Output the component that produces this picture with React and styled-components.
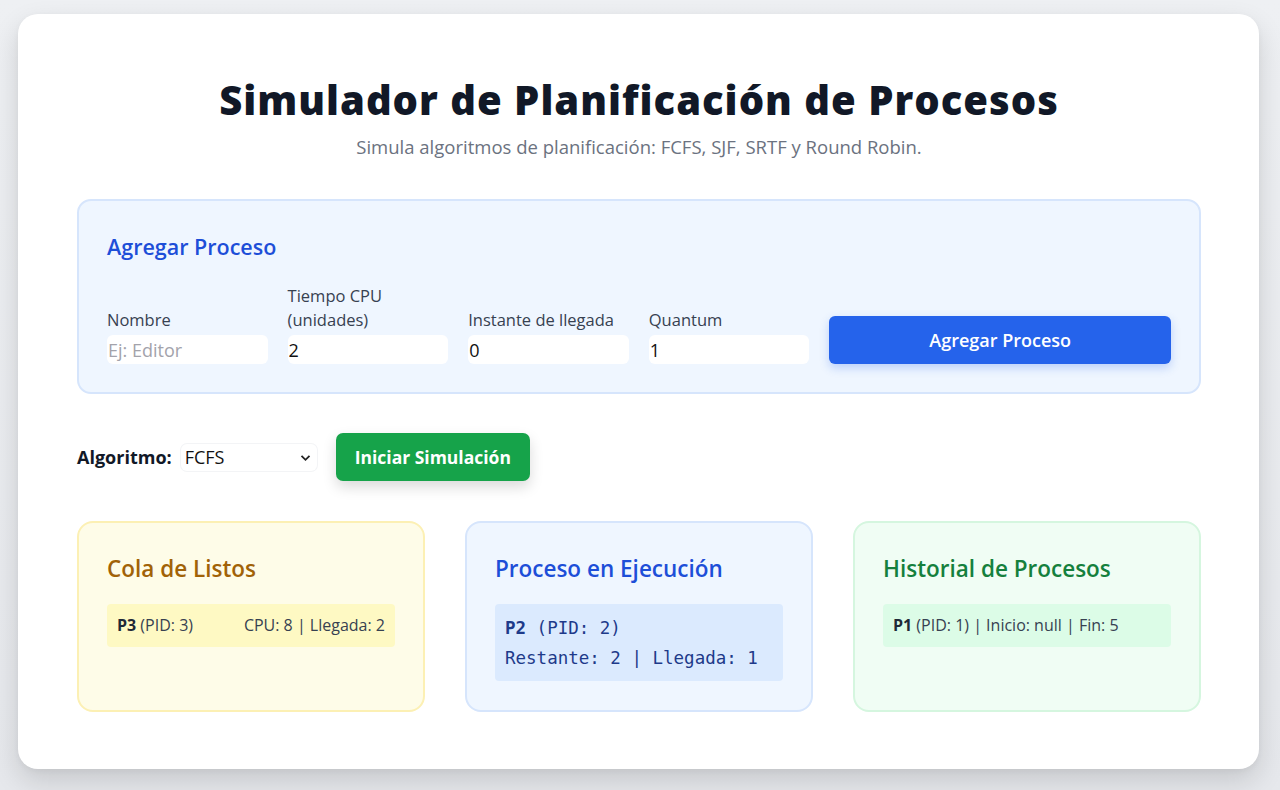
import React from "react";
import styled, { createGlobalStyle } from "styled-components";

const Global = createGlobalStyle`
  html, body { margin: 0; padding: 0; }
  body {
    background: linear-gradient(180deg, #eef0f3 0%, #e6e8ec 100%);
    font-family: "Open Sans", "Noto Sans", sans-serif;
    min-height: 790px;
  }
  * { box-sizing: border-box; }
`;

const Page = styled.div`
  padding: 14px 21px 20px 18px;
`;

const Card = styled.main`
  background: #ffffff;
  border-radius: 20px;
  box-shadow: 0 12px 28px rgba(0, 0, 0, 0.14), 0 2px 6px rgba(0, 0, 0, 0.04);
  padding: 62px 58px 58px 59px;
  height: 755px;
`;

const Title = styled.h1`
  margin: 0;
  text-align: center;
  font-size: 40px;
  line-height: 48px;
  font-weight: 800;
  color: #111827;
  letter-spacing: 1px;
`;

const Subtitle = styled.p`
  margin: 10px 0 0;
  text-align: center;
  font-size: 18.5px;
  line-height: 26px;
  color: #6b7280;
`;

const Panel = styled.section`
  margin-top: 39px;
  background: #eff6ff;
  border: 2px solid #d6e5fc;
  border-radius: 14px;
  padding: 30px 28px 28px 28px;
`;

const PanelTitle = styled.h2`
  margin: 0 0 21px;
  font-size: 21.5px;
  line-height: 32px;
  font-weight: 600;
  color: #1d4ed8;
`;

const BoxTitle = styled.h3`
  margin: 0 0 19px;
  font-size: 22.5px;
  line-height: 32px;
  font-weight: 600;
  color: ${(p) => p.$color};
`;

const FieldRow = styled.div`
  display: flex;
  align-items: flex-end;
  gap: 20px;
`;

const Field = styled.label`
  display: flex;
  flex-direction: column;
  width: 160.6px;
`;

const LabelText = styled.span`
  font-size: 16.5px;
  line-height: 24px;
  font-weight: 500;
  color: #374151;
  margin-bottom: 3px;
`;

const Input = styled.input`
  height: 29px;
  border: none;
  border-radius: 6px;
  background: #ffffff;
  padding: 0 1px;
  font-family: inherit;
  font-size: 18px;
  color: #111;
  outline: none;
  &::placeholder { color: #a3a3ab; }
`;

const PrimaryButton = styled.button`
  flex: 1;
  height: 48px;
  border: none;
  border-radius: 6px;
  background: #2563eb;
  color: #ffffff;
  font-family: inherit;
  font-size: 18px;
  font-weight: 600;
  box-shadow: 0 4px 10px rgba(37, 99, 235, 0.25);
  cursor: pointer;
`;

const Controls = styled.div`
  display: flex;
  align-items: center;
  margin-top: 39px;
`;

const ControlLabel = styled.span`
  font-size: 18px;
  font-weight: 700;
  color: #111827;
  margin-right: 9px;
`;

const SelectWrap = styled.div`
  position: relative;
  width: 136px;
  height: 27px;
  margin-right: 19px;
`;

const Select = styled.select`
  appearance: none;
  width: 100%;
  height: 100%;
  border: none;
  border-radius: 6px;
  background: #ffffff;
  box-shadow: 0 0 0 1px #f3f4f6;
  font-family: inherit;
  font-size: 18px;
  color: #111;
  padding: 0 4px;
  outline: none;
`;

const Chevron = styled.svg`
  position: absolute;
  right: 6px;
  top: 10px;
  pointer-events: none;
`;

const GreenButton = styled.button`
  height: 48px;
  padding: 0 19px;
  border: none;
  border-radius: 7px;
  background: #16a34a;
  color: #ffffff;
  font-family: inherit;
  font-size: 17.5px;
  font-weight: 700;
  box-shadow: 0 6px 14px rgba(0, 0, 0, 0.15);
  cursor: pointer;
`;

const Columns = styled.div`
  display: grid;
  grid-template-columns: repeat(3, 1fr);
  gap: 40px;
  margin-top: 40px;
`;

const tones = {
  yellow: { bg: "#fefce8", border: "#fcf0b4", title: "#a16207", item: "#fef9c3" },
  blue: { bg: "#eff6ff", border: "#d6e5fc", title: "#1d4ed8", item: "#dbeafe" },
  green: { bg: "#f0fdf4", border: "#d5f6df", title: "#15803d", item: "#dcfce7" },
};

const Box = styled.section`
  background: ${(p) => tones[p.$tone].bg};
  border: 2px solid ${(p) => tones[p.$tone].border};
  border-radius: 16px;
  padding: 30px 28px;
  height: 191px;
`;

const Item = styled.div`
  background: ${(p) => tones[p.$tone].item};
  border-radius: 4px;
  padding: 9px 10px;
  font-size: 16px;
  line-height: 25px;
  color: #374151;
  display: flex;
  justify-content: ${(p) => (p.$spread ? "space-between" : "flex-start")};
  gap: 4px;
`;

const Strong = styled.b`
  font-weight: 700;
  color: ${(p) => p.$color || "#1f2937"};
`;

const Mono = styled.div`
  background: ${(p) => tones[p.$tone].item};
  border-radius: 4px;
  padding: 9px 10px 8px;
  font-family: "DejaVu Sans Mono", "Liberation Mono", monospace;
  font-size: 17.5px;
  line-height: 30px;
  color: #1e3a8a;
`;

export default function App() {
  return (
    <>
      <Global />
      <Page>
        <Card>
          <Title>Simulador de Planificación de Procesos</Title>
          <Subtitle>Simula algoritmos de planificación: FCFS, SJF, SRTF y Round Robin.</Subtitle>

          <Panel>
            <PanelTitle>Agregar Proceso</PanelTitle>
            <FieldRow>
              <Field>
                <LabelText>Nombre</LabelText>
                <Input placeholder="Ej: Editor" />
              </Field>
              <Field>
                <LabelText>Tiempo CPU<br />(unidades)</LabelText>
                <Input defaultValue="2" />
              </Field>
              <Field>
                <LabelText>Instante de llegada</LabelText>
                <Input defaultValue="0" />
              </Field>
              <Field>
                <LabelText>Quantum</LabelText>
                <Input defaultValue="1" />
              </Field>
              <PrimaryButton>Agregar Proceso</PrimaryButton>
            </FieldRow>
          </Panel>

          <Controls>
            <ControlLabel>Algoritmo:</ControlLabel>
            <SelectWrap>
              <Select defaultValue="FCFS">
                <option>FCFS</option>
                <option>SJF</option>
                <option>SRTF</option>
                <option>Round Robin</option>
              </Select>
              <Chevron width="11" height="8" viewBox="0 0 11 8">
                <path d="M1.5 1.8 L5.5 5.8 L9.5 1.8" fill="none" stroke="#222" strokeWidth="1.8" />
              </Chevron>
            </SelectWrap>
            <GreenButton>Iniciar Simulación</GreenButton>
          </Controls>

          <Columns>
            <Box $tone="yellow">
              <BoxTitle $color={tones.yellow.title}>Cola de Listos</BoxTitle>
              <Item $tone="yellow" $spread>
                <span><Strong>P3</Strong> (PID: 3)</span>
                <span>CPU: 8 | Llegada: 2</span>
              </Item>
            </Box>
            <Box $tone="blue">
              <BoxTitle $color={tones.blue.title}>Proceso en Ejecución</BoxTitle>
              <Mono $tone="blue">
                <div><Strong $color="#1e3a8a">P2</Strong> (PID: 2)</div>
                <div>Restante: 2 | Llegada: 1</div>
              </Mono>
            </Box>
            <Box $tone="green">
              <BoxTitle $color={tones.green.title}>Historial de Procesos</BoxTitle>
              <Item $tone="green">
                <span><Strong>P1</Strong> (PID: 1) | Inicio: null | Fin: 5</span>
              </Item>
            </Box>
          </Columns>
        </Card>
      </Page>
    </>
  );
}
